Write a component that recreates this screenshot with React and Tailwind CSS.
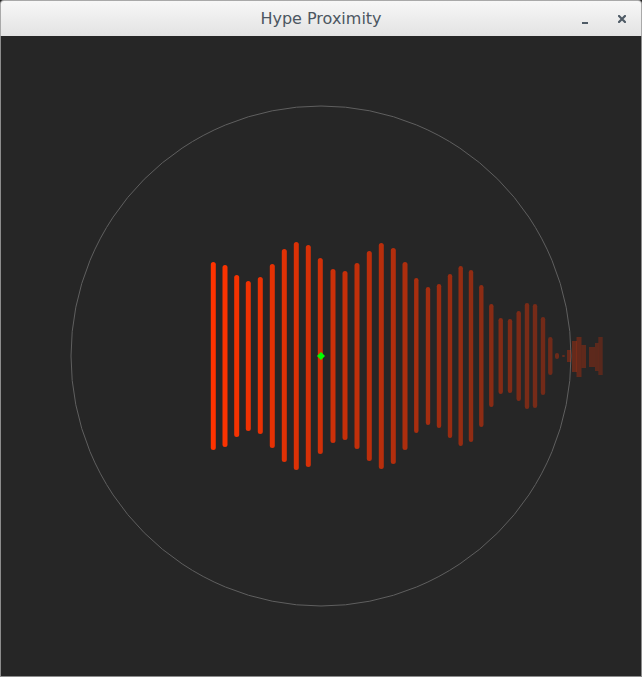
import React from 'react';

// center x, top y, bottom y (page coords)
const bars = [
  [213.3, 262, 450], [225, 265, 447], [236.7, 275, 437], [248.3, 281, 431],
  [260.3, 277, 434], [272.3, 264, 448], [284.3, 249, 462], [296.3, 242, 470],
  [308.3, 245, 467], [320.3, 258, 454], [333, 269, 443], [345, 271, 440],
  [357, 263, 449], [369.3, 251, 461], [381.3, 243, 469], [393.3, 248, 464],
  [405, 262, 450], [416.3, 278, 433], [428, 287, 425], [439, 284, 428],
  [450, 274, 438], [460.7, 266, 446], [471, 270, 442], [481.3, 285, 427],
  [491.3, 304, 407], [500.7, 318, 394], [510, 319, 393], [518.7, 311, 401],
  [527, 303, 409], [535, 304, 408], [543, 317, 395], [550.3, 337, 375],
  [557, 353, 359], [563.5, 355, 357],
];

// wide blocks at the far right: x, width, top, bottom
const blocks = [
  [567, 4, 350, 362],
  [572, 5, 341, 372],
  [576.5, 5, 337, 377],
  [581.5, 4.5, 345, 368],
  [589, 6, 347, 367],
  [595, 3.5, 343, 371],
  [598.3, 4.4, 337, 375],
];

const alphaAt = (x) => Math.max(0.22, 1 - ((x - 213) / 387) * 0.76);

function Waveform() {
  return (
    <svg viewBox="1 36 640 640" width="640" height="640" className="block">
      <circle cx="321" cy="356" r="250" fill="none" stroke="#5f5f5f" strokeWidth="1" />
      {bars.map(([x, t, b], i) => {
        const w = i < 17 ? 5 : i < 32 ? 4.4 : i === 32 ? 4 : 3;
        return (
          <rect
            key={i}
            x={x - w / 2}
            y={t}
            width={w}
            height={b - t}
            rx={w / 2}
            fill="#ff3300"
            fillOpacity={alphaAt(x)}
          />
        );
      })}
      {blocks.map(([x, w, t, b], i) => (
        <rect key={'b' + i} x={x} y={t} width={w} height={b - t} fill="#ff3300" fillOpacity={alphaAt(x + w / 2)} />
      ))}
      <polygon points="321,352 325,356 321,360 317,356" fill="#00ff00" />
    </svg>
  );
}

export default function App() {
  return (
    <div className="w-[642px] h-[677px] flex flex-col bg-[#262626] font-['DejaVu_Sans','Noto_Sans',sans-serif]">
      {/* Title Bar */}
      <div className="h-[36px] shrink-0 grid grid-cols-[1fr_auto_1fr] items-center rounded-t-[4px] border border-b-0 border-[#a9a9a9] bg-gradient-to-b from-[#f7f7f7] to-[#e3e3e3]">
        <div />
        <div className="text-[16px] text-[#4c5661] leading-none">Hype Proximity</div>
        <div className="flex items-center justify-end pr-[15px] gap-[30px]">
          <div className="w-[6px] h-[2px] mt-[8px] bg-[#4f5b66]" />
          <svg width="8" height="8" viewBox="0 0 8 8" className="mt-[1px]">
            <path d="M1 1 L7 7 M7 1 L1 7" stroke="#4f5b66" strokeWidth="2.2" strokeLinecap="square" />
          </svg>
        </div>
      </div>

      {/* Canvas */}
      <div className="flex-1 border border-t-0 border-[#8c8c8c] overflow-hidden">
        <Waveform />
      </div>
    </div>
  );
}
